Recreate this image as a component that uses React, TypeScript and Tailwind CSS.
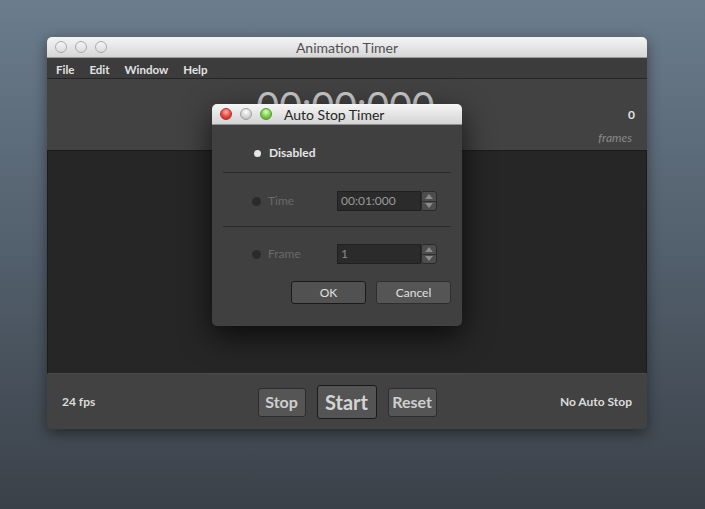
import React from "react";

const font = { fontFamily: "Lato, 'Open Sans', 'Liberation Sans', sans-serif" };

function GrayLight() {
  return (
    <div className="w-[12px] h-[12px] rounded-full border border-[#a9a9a9] bg-[linear-gradient(#f4f4f4,#dcdcdc)]" />
  );
}

function Stepper() {
  return (
    <div className="flex flex-col w-[16px] h-[20px] border border-[#2a2a2a] rounded-[3px] overflow-hidden bg-[#4d4d4d]">
      <div className="flex-1 flex items-center justify-center border-b border-[#2f2f2f]">
        <svg width="8" height="5" viewBox="0 0 8 5"><path d="M0 5 L4 0 L8 5 Z" fill="#8a8a8a" /></svg>
      </div>
      <div className="flex-1 flex items-center justify-center">
        <svg width="8" height="5" viewBox="0 0 8 5"><path d="M0 0 L4 5 L8 0 Z" fill="#8a8a8a" /></svg>
      </div>
    </div>
  );
}

export default function App() {
  return (
    <div
      className="relative w-[705px] h-[509px] overflow-hidden bg-[linear-gradient(#6b7c8c,#525f6c_50%,#3b4149)]"
      style={font}
    >
      <div className="pt-[37px] pl-[47px]">
        <div className="w-[600px] rounded-[5px] overflow-hidden shadow-[0_4px_14px_rgba(0,0,0,0.45)]">
          {/* title bar */}
          <div className="relative h-[21px] flex items-center bg-[linear-gradient(#f5f5f5,#d6d6d6)] border-b border-[#9a9a9a]">
            <div className="flex gap-[8px] pl-[8px]">
              <GrayLight />
              <GrayLight />
              <GrayLight />
            </div>
            <div className="absolute inset-0 flex items-center justify-center text-[14px] text-[#505050]">
              Animation Timer
            </div>
          </div>
          {/* menu */}
          <div className="h-[21px] flex items-center gap-[15px] pl-[9px] pt-[3px] bg-[#3c3c3c] border-b border-[#262626] text-[11.5px] font-bold text-[#e2e2e2]">
            <span>File</span>
            <span>Edit</span>
            <span>Window</span>
            <span>Help</span>
          </div>
          {/* timer area */}
          <div className="h-[71px] grid grid-cols-[1fr_auto_1fr] bg-[#424242]">
            <div />
            <div className="pt-[7px] pr-[3px] text-[39px] leading-none text-[#c9c9c9]">
              00:00:000
            </div>
            <div className="flex flex-col items-end pr-[12px] pt-[29px]">
              <span className="text-[12px] font-bold text-[#e0e0e0] leading-[14px]">0</span>
              <span className="mt-[9px] pr-[3px] text-[12px] italic text-[#8a8a8a] leading-[14px]">frames</span>
            </div>
          </div>
          {/* dark panel */}
          <div className="h-[224px] bg-[#262626] border border-[#1b1b1b] border-b-[#4a4a4a]" />
          {/* bottom bar */}
          <div className="h-[55px] grid grid-cols-[1fr_auto_1fr] items-center bg-[#424242]">
            <div className="pl-[15px] text-[12px] font-bold text-[#dcdcdc]">24 fps</div>
            <div className="flex items-center gap-[11px] pt-[1px]">
              <div className="w-[48px] h-[29px] flex items-center justify-center rounded-[3px] border border-[#2c2c2c] bg-[#555555] text-[16px] font-bold text-[#cfcfcf]">
                Stop
              </div>
              <div className="w-[60px] h-[34px] flex items-center justify-center rounded-[3px] border border-[#1a1a1a] bg-[#545454] text-[20px] font-bold text-[#d4d4d4]">
                Start
              </div>
              <div className="w-[49px] h-[29px] flex items-center justify-center rounded-[3px] border border-[#2c2c2c] bg-[#555555] text-[16px] font-bold text-[#cfcfcf]">
                Reset
              </div>
            </div>
            <div className="flex justify-end pr-[15px] text-[12px] font-bold text-[#dcdcdc]">No Auto Stop</div>
          </div>
        </div>
      </div>

      {/* dialog */}
      <div className="absolute left-[212px] top-[104px] w-[250px] rounded-[5px] overflow-hidden shadow-[0_10px_30px_rgba(0,0,0,0.7)]">
        <div className="h-[21px] flex items-center bg-[linear-gradient(#f6f6f6,#d4d4d4)] border-b border-[#8f8f8f]">
          <div className="flex gap-[8px] pl-[8px]">
            <div className="w-[12px] h-[12px] rounded-full border border-[#a8322c] bg-[radial-gradient(circle_at_50%_30%,#ffb0a8,#e8453c_55%,#b8241c)]" />
            <div className="w-[12px] h-[12px] rounded-full border border-[#a0a0a0] bg-[radial-gradient(circle_at_50%_30%,#ffffff,#d4d4d4_55%,#b0b0b0)]" />
            <div className="w-[12px] h-[12px] rounded-full border border-[#4f9a2e] bg-[radial-gradient(circle_at_50%_30%,#d8ffb8,#7ccc4c_55%,#4c9a26)]" />
          </div>
          <span className="ml-[12px] text-[14px] text-[#262626]">Auto Stop Timer</span>
        </div>
        <div className="h-[201px] bg-[#404040] px-[11px] pt-[20px]">
          <div className="flex items-center pl-[31px] h-[16px]">
            <div className="w-[7px] h-[7px] rounded-full bg-[#e6e6e6]" />
            <span className="ml-[8px] text-[12px] font-bold text-[#e6e6e6]">Disabled</span>
          </div>
          <div className="mt-[11px] h-[1px] bg-[#2a2a2a]" />
          <div className="mt-[18px] flex items-center h-[20px]">
            <div className="flex items-center pl-[29px] w-[114px]">
              <div className="w-[9px] h-[9px] rounded-full bg-[#2b2b2b]" />
              <span className="ml-[7px] text-[12px] text-[#6a6a6a]">Time</span>
            </div>
            <div className="w-[84px] h-[20px] flex items-center pl-[3px] bg-[#2b2b2b] border border-[#202020] text-[12px] text-[#9a9a9a]">
              00:01:000
            </div>
            <Stepper />
          </div>
          <div className="mt-[15px] h-[1px] bg-[#2a2a2a]" />
          <div className="mt-[17px] flex items-center h-[20px]">
            <div className="flex items-center pl-[29px] w-[114px]">
              <div className="w-[9px] h-[9px] rounded-full bg-[#2b2b2b]" />
              <span className="ml-[7px] text-[12px] text-[#6a6a6a]">Frame</span>
            </div>
            <div className="w-[84px] h-[20px] flex items-center pl-[3px] bg-[#2b2b2b] border border-[#202020] text-[12px] text-[#8a8a8a]">
              1
            </div>
            <Stepper />
          </div>
          <div className="mt-[17px] flex justify-end gap-[10px]">
            <div className="w-[75px] h-[23px] flex items-center justify-center rounded-[3px] border border-[#1a1a1a] bg-[#515151] text-[12px] text-[#e0e0e0]">
              OK
            </div>
            <div className="w-[75px] h-[23px] flex items-center justify-center rounded-[3px] border border-[#2e2e2e] bg-[#555555] text-[12px] text-[#e0e0e0]">
              Cancel
            </div>
          </div>
        </div>
      </div>
    </div>
  );
}
